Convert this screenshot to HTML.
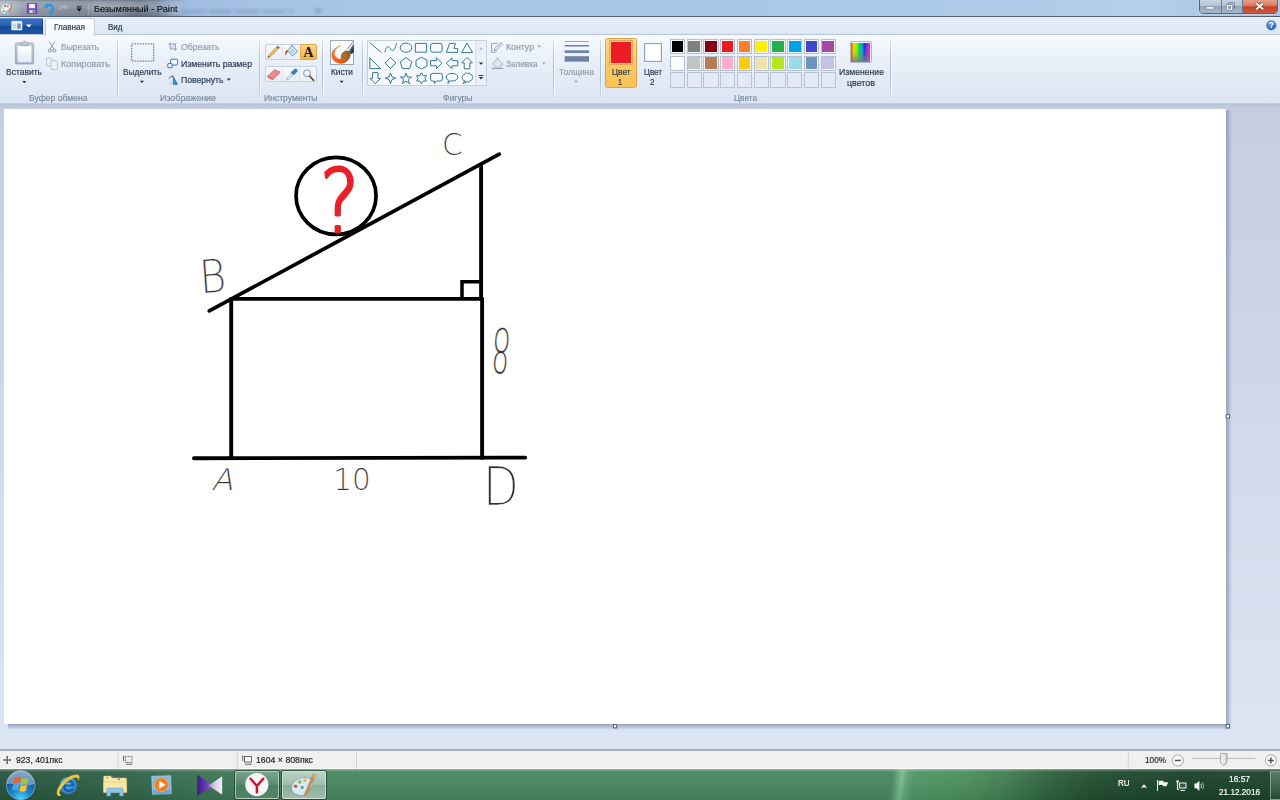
<!DOCTYPE html>
<html lang="ru"><head><meta charset="utf-8"><title>Безымянный - Paint</title>
<style>
html,body{margin:0;padding:0;}
body{width:1280px;height:800px;overflow:hidden;position:relative;background:#d3deee;font-family:"Liberation Sans","DejaVu Sans",sans-serif;}
.a{position:absolute;}
.t{-webkit-text-stroke:0.18px currentColor;position:absolute;height:14px;line-height:14px;white-space:nowrap;transform-origin:0 50%;font-family:"Liberation Sans","DejaVu Sans",sans-serif;}
svg{position:absolute;left:0;top:0;overflow:visible;}
/* title bar */
#title{left:0;top:0;width:1280px;height:16px;background:linear-gradient(90deg,#a6b0bd 0px,#98a2b0 14px,#8c97a6 40px,#828d9c 88px,#717c8b 118px,#677381 140px,#6f7f95 154px,#88a1bf 170px,#9fbde0 188px,#a5c4e6 260px,#a8c7e7 500px,#aac9e8 900px,#b3cfeb 1150px,#adcbe8 1200px,#a8c4e2 1280px);}
#titleL{left:0;top:0;width:200px;height:16px;background:linear-gradient(180deg,rgba(30,40,60,.14) 0,rgba(255,255,255,.10) 2px,rgba(255,255,255,.10) 7px,rgba(255,255,255,0) 10px,rgba(30,40,60,.10) 16px);-webkit-mask-image:linear-gradient(90deg,#000 0,#000 140px,transparent 195px);mask-image:linear-gradient(90deg,#000 0,#000 140px,transparent 195px);}
#titleline{left:0;top:15.6px;width:1280px;height:1.4px;background:#525e6e;}
#tabrow{left:0;top:17px;width:1280px;height:17px;background:linear-gradient(180deg,#f0f5fb 0,#e4edf7 1.5px,#dde8f4 100%);}
#tabline{left:0;top:34px;width:1280px;height:1px;background:#b8c6da;}
#ribbon{left:0;top:35px;width:1280px;height:69px;background:linear-gradient(180deg,#f6fafe 0,#eef4fb 14px,#e3ebf6 40px,#dbe5f2 69px);}
#ribbonline{left:0;top:103px;width:1280px;height:1px;background:#c3cfe0;}
#ribbonshadow{left:0;top:103.8px;width:1280px;height:5px;background:linear-gradient(180deg,#b5c3d6,rgba(190,202,220,.7) 60%,rgba(197,205,224,0));}
#work{left:0;top:104px;width:1280px;height:645px;background:linear-gradient(180deg,#c5cde0 0,#cbd4e5 30%,#d3dcec 60%,#dce5f3 100%);}
#workleft{display:none;}
#canvas{left:4px;top:108.7px;width:1222px;height:615.5px;background:#fff;}
#shr{left:1226px;top:109.5px;width:5.5px;height:619px;background:linear-gradient(90deg,rgba(128,142,168,.75),rgba(140,155,182,.45) 50%,rgba(150,165,190,0));}
#shb{left:8px;top:724.2px;width:1221px;height:5.5px;background:linear-gradient(180deg,rgba(128,142,168,.75),rgba(140,155,182,.45) 50%,rgba(150,165,190,0));}
#status{left:0;top:749px;width:1280px;height:20.4px;background:linear-gradient(180deg,#f3f0f0 0,#f1eeee 16.6px,#fbfafa 17.2px,#fbfafa 100%);border-top:2px solid #a9aeba;box-sizing:border-box;}
#taskbar{left:0;top:769px;width:1280px;height:31px;background:linear-gradient(180deg,rgba(235,240,238,.55) 0,rgba(225,235,230,.28) 1px,rgba(225,235,230,.18) 2.2px,rgba(255,255,255,.05) 3px,rgba(255,255,255,.03) 12px,rgba(0,0,0,.06) 30px),linear-gradient(97deg,#26523d 0,#2a5941 60px,#306349 130px,#3a7153 200px,#47855f 330px,#47855f 886px,#5c9c70 891px,#7ab88e 896px,#5fa374 901px,#4f9465 908px,#4a8c5c 960px,#407c50 1000px,#2e5f3c 1045px,#214c30 1090px,#1b412a 1180px,#1d452c 1284px);}
#filebtn{left:0;top:17.5px;width:42.5px;height:16.5px;background:linear-gradient(180deg,#3a73c0 0,#2a62b2 45%,#164a98 55%,#1e57a8 100%);border-radius:0 2px 0 0;box-shadow:inset 0 1px 0 #5b8ed0,inset -1px 0 0 #123f85;}
#tabactive{left:44.6px;top:18px;width:50.2px;height:17.5px;background:linear-gradient(180deg,#fbfdff,#f5f9fd);border:1px solid #c2cfe0;border-bottom:none;border-radius:2.5px 2.5px 0 0;box-sizing:border-box;}
#winbtns{left:1199px;top:-2px;width:79px;height:15.5px;border:1px solid #56657a;border-radius:0 0 4px 4px;box-sizing:border-box;overflow:hidden;background:#b9c9dc;box-shadow:0 0 2px rgba(255,255,255,.6);}
#wmin{left:0;top:0;width:21px;height:15px;background:linear-gradient(180deg,#c9d6e6 0,#b5c4d8 45%,#93a6bf 50%,#a9bad0 100%);border-right:1px solid #6b7a90;}
#wmax{left:22px;top:0;width:20px;height:15px;background:linear-gradient(180deg,#c9d6e6 0,#b5c4d8 45%,#93a6bf 50%,#a9bad0 100%);border-right:1px solid #6b7a90;}
#wclose{left:43px;top:0;width:36px;height:15px;background:linear-gradient(180deg,#e9a694 0,#d9785f 45%,#c4402a 52%,#cf5a3d 100%);}
.sep{top:40px;width:1px;height:57.5px;background:linear-gradient(180deg,rgba(176,190,210,.35),#b2bfd2 30%,#b2bfd2 70%,rgba(176,190,210,.35));box-shadow:1px 0 0 rgba(255,255,255,.6);}
.toolbox{border:1px solid #c4d0e0;border-radius:2px;box-sizing:border-box;background:linear-gradient(180deg,#f5f8fc,#e9eff7);}
#toolA{left:300px;top:44.3px;width:16.7px;height:16px;border:1px solid #e2a645;border-radius:2px;box-sizing:border-box;background:linear-gradient(180deg,#fdd78d 0,#fbc261 50%,#fab546 100%);}
#brushbox{left:330px;top:40px;width:24.2px;height:24.7px;background:#f9fbfd;border:1px solid #9ea7b4;box-sizing:border-box;}
#gallery{left:367.3px;top:40.3px;width:119.4px;height:45.6px;border:1px solid #c3d0e1;box-sizing:border-box;background:#f6f9fc;}
#galscroll{right:0;top:0;width:9.6px;height:43.6px;background:linear-gradient(90deg,#e6edf7,#eef3fa);border-left:1px solid #d6dfec;}
#color1{left:605px;top:38.3px;width:31.8px;height:50px;border:1px solid #e0a343;border-radius:2.5px;box-sizing:border-box;background:linear-gradient(180deg,#fcd88f 0,#fbc968 45%,#fbc256 100%);}
#c1sw{left:609px;top:40px;width:24px;height:24.5px;border:1px solid #d9a85a;box-sizing:border-box;background:#f6c775;padding:1px;}
#c1sw div{width:100%;height:100%;background:#ed1c24;}
#c2sw{left:643.9px;top:43.1px;width:18.2px;height:18.5px;border:1px solid #98a4b6;box-sizing:border-box;background:#e9eef5;padding:0.8px;}
#c2sw div{width:100%;height:100%;background:#fff;}
#palette{left:669.8px;top:38.9px;width:170px;height:50px;}
.pc{position:absolute;width:15.2px;height:15.2px;border:1px solid #b5c0d0;box-sizing:border-box;background:#f3f6fa;padding:0.8px;}
.pc div{width:100%;height:100%;}
.pc.e{background:#e3eaf5;border-color:#b9c3d2;}
#rainbow{left:849.7px;top:41.3px;width:22px;height:22.2px;border:1px solid #aeb8c6;box-sizing:border-box;background:#eef2f8;padding:0.7px;border-radius:1px;}
#rainbow div{width:100%;height:100%;background:linear-gradient(180deg,rgba(128,128,128,0) 0,rgba(128,128,128,.15) 50%,rgba(128,128,128,.9) 100%),linear-gradient(90deg,#ff4a00 0,#ffd800 15%,#7cff00 30%,#00d060 45%,#00b0d0 58%,#1030e0 72%,#c020e0 86%,#ff2080 100%);}
.tbtn{top:770.6px;height:28.6px;border:1px solid rgba(235,245,240,.55);border-radius:2px;box-sizing:border-box;box-shadow:0 0 0 1px rgba(20,50,35,.6);}
#showdesk{left:1269.5px;top:771px;width:11px;height:29px;border:1px solid rgba(200,225,210,.45);box-sizing:border-box;background:linear-gradient(180deg,rgba(255,255,255,.25),rgba(255,255,255,.05));}

#ghost{left:182px;top:8.5px;width:112px;height:5px;background:repeating-linear-gradient(90deg,rgba(70,90,120,.17) 0,rgba(70,90,120,.17) 22px,rgba(70,90,120,.06) 22px,rgba(70,90,120,.06) 27px);filter:blur(1.6px);}
#ghost2{left:314px;top:7.5px;width:8px;height:6.5px;background:rgba(70,90,120,.22);filter:blur(1.6px);border-radius:3px;}

#haze{left:90px;top:2px;width:92px;height:12px;background:rgba(225,232,240,.30);filter:blur(3px);border-radius:6px;}
#dark1{left:128px;top:9px;width:40px;height:8px;background:rgba(50,60,75,.35);filter:blur(4px);}
#hazeL{left:-4px;top:0;width:22px;height:16px;background:rgba(230,236,244,.25);filter:blur(3px);}

</style></head>
<body>
<div class="a" id="title"></div><div class="a" id="titleL"></div>
<div class="a" id="dark1"></div><div class="a" id="haze"></div><div class="a" id="hazeL"></div><div class="a" id="ghost"></div><div class="a" id="ghost2"></div>
<div class="a" id="titleline"></div>
<div class="a" id="tabrow"></div>
<div class="a" id="tabline"></div>
<div class="a" id="ribbon"></div>
<div class="a" id="ribbonline"></div>
<div class="a" id="work"></div>
<div class="a" id="ribbonshadow"></div>
<div class="a" id="workleft"></div>
<div class="a" id="shr"></div><div class="a" id="shb"></div>
<div class="a" id="canvas"></div>
<div class="a" id="status"></div>
<div class="a" id="taskbar"></div>

<!-- file button + tabs -->
<div class="a" id="filebtn"></div>
<div class="a" id="tabactive"></div>

<!-- window buttons -->
<div class="a" id="winbtns"><div class="a" id="wmin"></div><div class="a" id="wmax"></div><div class="a" id="wclose"></div></div>

<!-- ribbon separators -->
<div class="a sep" style="left:117px"></div>
<div class="a sep" style="left:259px"></div>
<div class="a sep" style="left:321.5px"></div>
<div class="a sep" style="left:362px"></div>
<div class="a sep" style="left:552.5px"></div>
<div class="a sep" style="left:600px"></div>
<div class="a sep" style="left:890px"></div>

<!-- tools boxes -->
<div class="a toolbox" style="left:264.5px;top:44.3px;width:52px;height:16px"></div>
<div class="a toolbox" style="left:264.5px;top:66.2px;width:52px;height:16px"></div>
<div class="a" id="toolA"></div>
<div class="a" id="brushbox"></div>

<!-- shapes gallery -->
<div class="a" id="gallery"><div class="a" id="galscroll"></div></div>

<!-- colors -->
<div class="a" id="color1"></div>
<div class="a" id="c1sw"><div></div></div>
<div class="a" id="c2sw"><div></div></div>
<div class="a" id="palette">
<div class="pc" style="left:0.00px;top:0.00px"><div style="background:#000000"></div></div>
<div class="pc" style="left:16.76px;top:0.00px"><div style="background:#7f7f7f"></div></div>
<div class="pc" style="left:33.52px;top:0.00px"><div style="background:#880015"></div></div>
<div class="pc" style="left:50.28px;top:0.00px"><div style="background:#ed1c24"></div></div>
<div class="pc" style="left:67.04px;top:0.00px"><div style="background:#ff7f27"></div></div>
<div class="pc" style="left:83.80px;top:0.00px"><div style="background:#fff200"></div></div>
<div class="pc" style="left:100.56px;top:0.00px"><div style="background:#22b14c"></div></div>
<div class="pc" style="left:117.32px;top:0.00px"><div style="background:#00a2e8"></div></div>
<div class="pc" style="left:134.08px;top:0.00px"><div style="background:#3f48cc"></div></div>
<div class="pc" style="left:150.84px;top:0.00px"><div style="background:#a349a4"></div></div>
<div class="pc" style="left:0.00px;top:16.76px"><div style="background:#ffffff"></div></div>
<div class="pc" style="left:16.76px;top:16.76px"><div style="background:#c3c3c3"></div></div>
<div class="pc" style="left:33.52px;top:16.76px"><div style="background:#b97a57"></div></div>
<div class="pc" style="left:50.28px;top:16.76px"><div style="background:#ffaec9"></div></div>
<div class="pc" style="left:67.04px;top:16.76px"><div style="background:#ffc90e"></div></div>
<div class="pc" style="left:83.80px;top:16.76px"><div style="background:#efe4b0"></div></div>
<div class="pc" style="left:100.56px;top:16.76px"><div style="background:#b5e61d"></div></div>
<div class="pc" style="left:117.32px;top:16.76px"><div style="background:#99d9ea"></div></div>
<div class="pc" style="left:134.08px;top:16.76px"><div style="background:#7092be"></div></div>
<div class="pc" style="left:150.84px;top:16.76px"><div style="background:#c8bfe7"></div></div>
<div class="pc e" style="left:0.00px;top:33.52px"></div>
<div class="pc e" style="left:16.76px;top:33.52px"></div>
<div class="pc e" style="left:33.52px;top:33.52px"></div>
<div class="pc e" style="left:50.28px;top:33.52px"></div>
<div class="pc e" style="left:67.04px;top:33.52px"></div>
<div class="pc e" style="left:83.80px;top:33.52px"></div>
<div class="pc e" style="left:100.56px;top:33.52px"></div>
<div class="pc e" style="left:117.32px;top:33.52px"></div>
<div class="pc e" style="left:134.08px;top:33.52px"></div>
<div class="pc e" style="left:150.84px;top:33.52px"></div>
</div>
<div class="a" id="rainbow"><div></div></div>

<!-- canvas drawing -->
<svg id="drawing" width="1280" height="800" viewBox="0 0 1280 800">
  <g fill="none" stroke="#000" stroke-width="3.9" stroke-linecap="round">
    <line x1="194" y1="458.2" x2="525.2" y2="457.6"/>
    <line x1="231.2" y1="299" x2="231.2" y2="458"/>
    <line x1="481.1" y1="166.5" x2="481.1" y2="298.9"/>
    <line x1="482.1" y1="298.9" x2="482.1" y2="457.8"/>
    <line x1="231.2" y1="298.9" x2="482" y2="298.9"/>
    <line x1="209.3" y1="310.9" x2="499.3" y2="154.2" stroke-width="3.7"/>
    <ellipse cx="336.05" cy="195.85" rx="40" ry="38.5" stroke-width="3.7"/>
    <path d="M462 297 V281.8 H481" stroke-width="3.5" stroke-linecap="butt"/>
  </g>
  <g font-family="'DejaVu Sans','Liberation Sans',sans-serif" font-weight="200" fill="#333" stroke="#fff" stroke-width="0.2">
    <text id="lq" x="339.5" y="232" font-size="88" fill="#e8202a" stroke="#e8202a" stroke-width="3.1" stroke-linejoin="round" text-anchor="middle" transform="translate(339.5 0) scale(0.84 1) translate(-339.5 0)">?</text>
    <text id="lC" x="452.5" y="155.5" font-size="31" text-anchor="middle" transform="translate(452.5 0) scale(0.96 1) translate(-452.5 0)">C</text>
    <text id="lB" stroke-width="0.42" x="212.5" y="292.5" font-size="46" text-anchor="middle" transform="rotate(-4 212 275) translate(212.5 0) scale(0.88 1) translate(-212.5 0)">B</text>
    <text id="l8" stroke-width="0.5" x="501.5" y="373" font-size="62" text-anchor="middle" transform="rotate(184 501.3 350.6) translate(501.5 0) scale(0.48 1) translate(-501.5 0)">8</text>
    <text id="lA" x="222" y="490" font-size="30" text-anchor="middle" transform="translate(222 490) skewX(-14) scale(1.05 1) translate(-222 -490)">A</text>
    <text id="l10" x="352" y="490" font-size="30" text-anchor="middle" transform="translate(352 0) scale(0.98 1) translate(-352 0)">10</text>
    <text id="lD" stroke-width="0.5" x="501" y="505" font-size="53" text-anchor="middle" transform="translate(501 0) scale(0.88 1) translate(-501 0)">D</text>
  </g>
  <!-- canvas handles -->
  <g fill="#fff" stroke="#4a5568" stroke-width="0.9">
    <rect x="1226.1" y="414.8" width="3.3" height="3.3"/>
    <rect x="613.4" y="724.6" width="3.3" height="3.3"/>
    <rect x="1226.1" y="724.6" width="3.3" height="3.3"/>
  </g>
</svg>

<!-- ribbon icons -->
<svg id="icons" width="1280" height="110" viewBox="0 0 1280 110">
  <defs>
    <linearGradient id="gclip" x1="0" y1="0" x2="0" y2="1"><stop offset="0" stop-color="#c3cede"/><stop offset="1" stop-color="#9eacc4"/></linearGradient>
    <linearGradient id="gpaper" x1="0" y1="0" x2="0" y2="1"><stop offset="0" stop-color="#ffffff"/><stop offset="1" stop-color="#e4eaf4"/></linearGradient>
    <linearGradient id="gbrush" x1="0" y1="0" x2="0.6" y2="1"><stop offset="0" stop-color="#c9703a"/><stop offset="0.45" stop-color="#f0712a"/><stop offset="1" stop-color="#e8561c"/></linearGradient>
    <radialGradient id="ghelp" cx="0.4" cy="0.3" r="0.8"><stop offset="0" stop-color="#6fa4ea"/><stop offset="1" stop-color="#1546a8"/></radialGradient>
  </defs>

  <!-- quick access: app icon -->
  <g>
    <path d="M0.5 9.5 C0.5 5.5 4 3.2 7.2 3.6 C10.4 4 11.4 6.6 10 8.4 C9 9.6 7.6 9.4 7.4 10.6 C7.2 12 8.6 12.6 7 13.6 C4 14.8 0.5 13 0.5 9.5Z" fill="#eef2f8" stroke="#8f9fb8" stroke-width="0.6"/>
    <circle cx="3" cy="8" r="1.1" fill="#e9c53a"/><circle cx="5.2" cy="5.8" r="1.1" fill="#d4552f"/><circle cx="7.8" cy="6.2" r="1" fill="#4a8fd8"/><circle cx="3.6" cy="11" r="1.1" fill="#4fae5a"/><circle cx="6" cy="12.2" r="0.9" fill="#3fa6d8"/>
    <path d="M9.2 11.5 L11.3 3.2 L12.4 3.6 L10.6 12Z" fill="#e58a3a"/><path d="M11.3 3.2 L11.8 1.6 L12.6 2 L12.4 3.6Z" fill="#b8b8c8"/>
  </g>
  <line x1="17.5" y1="3" x2="17.5" y2="14" stroke="#9fb0c8" stroke-width="0.6" opacity=".6"/>
  <!-- save -->
  <g>
    <rect x="27.2" y="3.6" width="9.6" height="9.8" rx="0.8" fill="#7a4fb8" stroke="#5b3594" stroke-width="0.6"/>
    <rect x="29" y="3.9" width="6" height="4.3" fill="#f3e9fb"/>
    <rect x="29.4" y="10" width="5.2" height="3.2" fill="#d9cdea"/><rect x="32.6" y="10.5" width="1.3" height="2.2" fill="#6a45a5"/>
  </g>
  <!-- undo -->
  <path d="M46.4 5.8 Q52.4 3.8 53 8.4 Q53.2 11.4 50.6 13.4" fill="none" stroke="#2b97e4" stroke-width="2.5" stroke-linecap="round"/>
  <path d="M43.4 7.6 L47.6 3.2 L48 8.6Z" fill="#2b97e4"/>
  <!-- redo (disabled) -->
  <path d="M66.2 6.8 Q61 5 60.2 9 " fill="none" stroke="#b4bfce" stroke-width="2" stroke-linecap="round" opacity=".65"/>
  <path d="M68.6 8.2 L64.8 4.4 L64.6 9Z" fill="#b4bfce" opacity=".65"/>
  <!-- qat dropdown -->
  <rect x="76.8" y="6.4" width="4.8" height="1" fill="#0d0d0d"/>
  <path d="M76.6 8.6 H81.8 L79.2 11.4Z" fill="#0d0d0d"/>
  <line x1="87.4" y1="3" x2="87.4" y2="14" stroke="#5a6675" stroke-width="0.6" opacity=".6"/>
  <line x1="88.1" y1="3" x2="88.1" y2="14" stroke="#d5dde8" stroke-width="0.7" opacity=".7"/>

  <!-- file button icon -->
  <rect x="11.6" y="21.2" width="10.4" height="8.8" rx="0.6" fill="#f4f7fc" stroke="#dfe8f5" stroke-width="0.5"/>
  <rect x="12.8" y="23.4" width="3.6" height="5.4" fill="#c9d3e6"/>
  <rect x="17.2" y="23.4" width="3.6" height="5.4" fill="#7a86c2"/>
  <path d="M26 24.4 H31.6 L28.8 27.4Z" fill="#fff"/>

  <!-- window buttons glyphs -->
  <rect x="1206" y="6.6" width="8" height="2.6" rx="0.6" fill="#fdfdfd" stroke="#5b6778" stroke-width="0.6"/>
  <rect x="1228.3" y="2.6" width="6.2" height="5.6" rx="0.6" fill="none" stroke="#5b6778" stroke-width="0.7"/>
  <rect x="1226.4" y="4.4" width="6.4" height="6" rx="0.7" fill="#fdfdfd" stroke="#5b6778" stroke-width="0.7"/>
  <rect x="1228.4" y="6.4" width="2.4" height="2.2" fill="#8fa0b8" stroke="#5b6778" stroke-width="0.4"/>
  <path d="M1256.2 3.2 L1263.2 9.2 M1263.2 3.2 L1256.2 9.2" stroke="#6b2a1d" stroke-width="3" stroke-linecap="butt"/>
  <path d="M1256.2 3.2 L1263.2 9.2 M1263.2 3.2 L1256.2 9.2" stroke="#fff" stroke-width="1.9" stroke-linecap="butt"/>

  <!-- help -->
  <circle cx="1271.3" cy="25.3" r="5" fill="url(#ghelp)" stroke="#9db7e0" stroke-width="0.8"/>
  <text x="1271.3" y="28.4" font-size="8.6" font-weight="bold" fill="#fff" text-anchor="middle" font-family="'Liberation Sans',sans-serif">?</text>

  <!-- paste -->
  <g>
    <rect x="15.3" y="43" width="18.4" height="21" rx="1.6" fill="url(#gclip)" stroke="#93a1ba" stroke-width="0.7"/>
    <rect x="17.4" y="45.6" width="14.2" height="16.6" fill="url(#gpaper)" stroke="#b9c4d6" stroke-width="0.4"/>
    <path d="M20.5 45.8 V43.4 Q20.5 42.6 21.5 42.6 H22.8 Q23 41 24.5 41 Q26 41 26.2 42.6 H27.5 Q28.5 42.6 28.5 43.4 V45.8Z" fill="#b9c4d6" stroke="#8f9db5" stroke-width="0.5"/>
  </g>
  <!-- scissors (disabled) -->
  <g stroke="#8d9bb3" stroke-width="1" fill="none" stroke-linecap="round">
    <path d="M49.3 41.8 L54 49.4 M54.6 41.8 L50 49.4"/>
    <circle cx="49.8" cy="50.6" r="1.5"/><circle cx="54.2" cy="50.6" r="1.5"/>
  </g>
  <!-- copy (disabled) -->
  <g fill="#eef2f8" stroke="#a5b1c5" stroke-width="0.7">
    <path d="M46.6 58 H50.6 L52.4 59.8 V66 H46.6Z"/>
    <path d="M51 60.8 H55.4 L57.4 62.8 V69.4 H51Z"/>
  </g>
  <!-- dropdown arrows -->
  <g fill="#2b2b2b">
    <path d="M22.3 81 H26.3 L24.3 83.2Z"/>
    <path d="M140 80.8 H144 L142 83Z"/>
    <path d="M226.8 78.5 H230.8 L228.8 80.7Z"/>
    <path d="M339.6 80.7 H343.6 L341.6 82.9Z"/>
  </g>
  <g fill="#9aa3b2">
    <path d="M537.2 45.6 H541.2 L539.2 47.8Z"/>
    <path d="M541.8 62.4 H545.8 L543.8 64.6Z"/>
    <path d="M574.1 80.8 H578.1 L576.1 83Z"/>
  </g>

  <!-- select dashed rect -->
  <rect x="131.7" y="43.9" width="22" height="17.2" fill="none" stroke="#465c80" stroke-width="0.9" stroke-dasharray="1.6 1.1"/>
  <!-- crop (disabled) -->
  <g stroke="#8d9bb3" stroke-width="0.9" fill="none">
    <path d="M170.2 42.4 V49 H177"/><path d="M168.4 44 H175.4 V50.8"/><path d="M171.2 48 L176.6 42.6" stroke-width="0.7"/>
  </g>
  <!-- resize -->
  <g fill="#f4f8fd" stroke="#2c6aa6" stroke-width="0.9">
    <rect x="170.6" y="59.2" width="7" height="5.8" rx="0.6"/>
    <rect x="167.8" y="63.6" width="4.4" height="4" rx="0.4"/>
  </g>
  <!-- rotate -->
  <g>
    <path d="M173.4 76.6 L177.6 84.4 H173.4Z" fill="#3b8cd0" stroke="#1f5f9e" stroke-width="0.6"/>
    <path d="M172.4 84.4 H168.4 L172.4 79.4Z" fill="#c9d2e0" opacity=".8"/>
    <path d="M168.8 78.6 Q170.2 76 172.6 76.2" fill="none" stroke="#3c4a60" stroke-width="0.8"/>
    <path d="M172 75.2 L173.6 76.3 L171.9 77.3Z" fill="#3c4a60"/>
  </g>

  <g stroke="#d3dce9" stroke-width="0.7"><line x1="282.2" y1="45.4" x2="282.2" y2="59.4"/><line x1="282.2" y1="67.2" x2="282.2" y2="81.2"/><line x1="299.6" y1="67.2" x2="299.6" y2="81.2"/></g>
  <!-- tools: pencil -->
  <g>
    <path d="M267.8 57.6 L268.6 55.2 L276.6 47 L278.4 48.8 L270.2 56.9Z" fill="#f0c64a" stroke="#8a6a2a" stroke-width="0.5"/>
    <path d="M276.6 47 L277.8 45.9 L279.5 47.6 L278.4 48.8Z" fill="#c7574a" stroke="#7a3a30" stroke-width="0.4"/>
    <path d="M267.8 57.6 L268.3 56 L269.4 57.1Z" fill="#333"/>
  </g>
  <!-- bucket -->
  <g>
    <path d="M287.6 50.2 L292.4 46 L297.6 51.4 L292.4 56Z" fill="#e9f1fb" stroke="#3c78b4" stroke-width="0.8"/>
    <path d="M289.4 51 L292.4 48.4 L295.4 51.4 L292.4 54Z" fill="#b7d2ee"/>
    <path d="M287.4 50 Q284.6 51 285.2 56 Q286.6 52.6 288.4 51.2Z" fill="#d8452e"/>
    <path d="M291 46.8 Q291.6 44.2 293.4 45.4" fill="none" stroke="#6a7f9a" stroke-width="0.6"/>
  </g>
  <!-- A -->
  <text x="308.4" y="57.4" font-size="14.2" font-weight="bold" fill="#1a1a1a" text-anchor="middle" font-family="'Liberation Serif',serif">A</text>
  <!-- eraser -->
  <g>
    <path d="M267.6 76 L274.6 69.6 L279.8 71.6 L273 78.4Z" fill="#f08a8a" stroke="#c55a5a" stroke-width="0.5"/>
    <path d="M267.6 76 L273 78.4 L272.8 80.2 L267.6 77.8Z" fill="#d96a6a"/>
    <path d="M273 78.4 L279.8 71.6 L279.6 73.4 L272.8 80.2Z" fill="#e27a7a"/>
  </g>
  <!-- picker -->
  <g>
    <path d="M286.6 79.8 L287 78.2 L292 73 L293.6 74.6 L288.4 79.6Z" fill="#e8eef6" stroke="#7a8698" stroke-width="0.5"/>
    <path d="M291.2 72.6 L294.6 69.2 Q296.2 68.4 297 69.6 Q297.8 70.8 296.6 72 L293.6 75Z" fill="#2f7fd0" stroke="#1f5aa0" stroke-width="0.5"/>
  </g>
  <!-- magnifier -->
  <g>
    <circle cx="307" cy="73.2" r="3.5" fill="#e9f3fb" stroke="#6d8fb4" stroke-width="0.9"/>
    <path d="M309.6 76 L313.6 80.4" stroke="#6a4a32" stroke-width="1.6" stroke-linecap="round"/>
  </g>
  <!-- brush icon -->
  <g>
    <path d="M353.7 41 L347 49.6 L350.6 53.6 L353.8 49 Z" fill="#f4f6fa"/>
    <path d="M353.6 41.2 L346.8 49.8" stroke="#5a6270" stroke-width="0.7" fill="none"/>
    <path d="M353.8 43.6 L348.6 51.4 L350.8 54 L353.8 50.4Z" fill="#4a5a80"/>
    <path d="M353.8 46.5 L350.4 52.6 L351.6 54.2 L353.8 52Z" fill="#2c3850"/>
    <path d="M341.4 59.6 C340 56 341.4 52.6 344.8 51 C346.8 50.3 349.2 50.9 350.4 52.6 C351 56.2 349.4 60 346.2 62 C344 63 342 62 341.4 59.6Z" fill="#a96c2c"/>
    <path d="M344.8 51 C346.8 50.3 349.2 50.9 350.4 52.6 C350.8 55 350.2 57.4 348.8 59.4 C347.8 56.4 346.6 53.4 344.8 51Z" fill="#8f5a26" opacity=".7"/>
    <path d="M339.9 45.4 C340.4 46 340 46.6 339.4 46.8 C337 47.8 334.6 49.8 334.4 53.4 C334.6 57 338 59.2 341.6 58.6 L346.6 61 C345 63.2 342.4 64 339.4 63.6 C334 62.6 331 58.4 331.6 54 C332.4 49.2 336.4 47.6 339.9 45.4Z" fill="url(#gbrush)"/>
  </g>

  <!-- shapes -->
  <g fill="none" stroke="#3b7797" stroke-width="1" stroke-linejoin="round">
    <!-- row1 -->
    <path d="M369.6 42.6 L381.4 52.4"/>
    <path d="M385 52.4 C386 45 389 46 390.6 49 C392.2 52 394.8 51 396.4 43.2"/>
    <ellipse cx="406" cy="47.7" rx="5.8" ry="4.6"/>
    <rect x="415.4" y="43.4" width="11.2" height="8.8"/>
    <rect x="430.6" y="43.4" width="11.6" height="8.8" rx="2.2"/>
    <path d="M446.4 52.4 L449.6 43.4 H455.4 L454 48.4 H457.6 V52.4Z"/>
    <path d="M467 43.2 L472.6 52.6 H461.6Z"/>
    <!-- row2 -->
    <path d="M369.8 58 V68.6 H380.6Z"/>
    <path d="M390.5 57.4 L395.8 63 L390.5 68.6 L385.2 63Z"/>
    <path d="M406 57.6 L411.8 61.8 L409.6 68.6 H402.4 L400.2 61.8Z"/>
    <path d="M421.5 57.2 L427 60.2 V66 L421.5 69 L416 66 V60.2Z"/>
    <path d="M430.6 60.6 H436.4 V57.8 L442 63.2 L436.4 68.6 V65.8 H430.6Z"/>
    <path d="M457.8 60.6 H452 V57.8 L446.4 63.2 L452 68.6 V65.8 H457.8Z"/>
    <path d="M464.2 68.8 V62.8 H461.6 L467 57.4 L472.4 62.8 H469.8 V68.8Z"/>
    <!-- row3 -->
    <path d="M372.6 72.6 V78.4 H370 L375.3 83.8 L380.6 78.4 H378 V72.6Z"/>
    <path d="M390.5 73 L392 76.8 L395.8 78.2 L392 79.6 L390.5 83.6 L389 79.6 L385.2 78.2 L389 76.8Z"/>
    <path d="M406 73 L407.5 77 H411.6 L408.3 79.5 L409.5 83.6 L406 81.1 L402.5 83.6 L403.7 79.5 L400.4 77 H404.5Z"/>
    <path d="M421.5 72.8 L423.2 75.6 H426.4 L424.8 78.3 L426.4 81 H423.2 L421.5 83.8 L419.8 81 H416.6 L418.2 78.3 L416.6 75.6 H419.8Z"/>
    <path d="M432.6 73.4 H440.4 Q442.4 73.4 442.4 75.4 V79 Q442.4 81 440.4 81 H436.4 L434.4 83.6 V81 H432.6 Q430.6 81 430.6 79 V75.4 Q430.6 73.4 432.6 73.4Z"/>
    <path d="M452 73.4 C455.6 73.4 457.8 75 457.8 77.2 C457.8 79.4 455.6 81 452 81 C451.2 81 450.6 80.9 450 80.8 L448 83.6 L448.4 80.2 C447 79.5 446.2 78.4 446.2 77.2 C446.2 75 448.4 73.4 452 73.4Z"/>
    <path d="M467.4 73.8 A1.55 1.55 0 0 1 470.3 74.5 A1.55 1.55 0 0 1 472.2 76.4 A1.55 1.55 0 0 1 472.2 78.6 A1.55 1.55 0 0 1 470.3 80.5 A1.55 1.55 0 0 1 467.4 81.2 A1.55 1.55 0 0 1 464.5 80.5 A1.55 1.55 0 0 1 462.6 78.6 A1.55 1.55 0 0 1 462.6 76.4 A1.55 1.55 0 0 1 464.5 74.5 A1.55 1.55 0 0 1 467.4 73.8Z"/><path d="M464.6 81.2 L463 83.6 L466.4 82"/>
  </g>
  <!-- gallery scroll arrows -->
  <path d="M479 49.4 H483 L481 47.2Z" fill="#aab3c2"/>
  <path d="M478.8 62.4 H483.2 L481 64.8Z" fill="#2b2b2b"/>
  <rect x="478.6" y="75" width="4.8" height="0.9" fill="#2b2b2b"/>
  <path d="M478.8 77 H483.2 L481 79.4Z" fill="#2b2b2b"/>

  <!-- outline icon (disabled) -->
  <g fill="none" stroke="#8d9bb3" stroke-width="0.9">
    <path d="M497.6 43.4 H491.6 V52.4 H494.4 Q495.8 52.2 496.8 51"/>
    <path d="M494 50.6 L494.6 48.6 L501 42.6 L502.6 44 L496.2 50.2Z" fill="#e9eef6"/>
  </g>
  <!-- fill icon (disabled) -->
  <g fill="#dfe6f0" stroke="#9aa7bd" stroke-width="0.8">
    <path d="M492.4 63.6 L497.6 58.6 L503 64 L497.6 68.6Z"/>
    <path d="M491.6 68.4 H503.4" stroke-width="1.4"/>
    <path d="M496.6 59.4 Q497 57.2 498.6 58" fill="none"/>
  </g>

  <!-- thickness -->
  <g fill="#6d83a6">
    <rect x="564.6" y="41.2" width="24.4" height="0.7"/>
    <rect x="564.6" y="45" width="24.4" height="1.5"/>
    <rect x="564.6" y="50.3" width="24.4" height="2.7"/>
    <rect x="564.6" y="56.2" width="24.4" height="5.5"/>
  </g>
</svg>

<!-- taskbar buttons -->
<div class="a tbtn" style="left:234.7px;width:44px;background:linear-gradient(180deg,rgba(255,255,255,.28),rgba(255,255,255,.10) 50%,rgba(255,255,255,.03) 52%,rgba(255,255,255,.12));"></div>
<div class="a tbtn" style="left:281.6px;width:44.5px;background:linear-gradient(180deg,rgba(255,255,255,.62),rgba(255,255,255,.48) 48%,rgba(255,255,255,.36) 52%,rgba(255,255,255,.5));"></div>
<div class="a" id="showdesk"></div>

<!-- status + taskbar icons -->
<svg id="bottom" width="1280" height="800" viewBox="0 0 1280 800">
  <defs>
    <radialGradient id="gorb" cx="0.5" cy="0.95" r="0.95"><stop offset="0" stop-color="#4fd0f6"/><stop offset="0.35" stop-color="#1f86cc"/><stop offset="0.7" stop-color="#1a5a9c"/><stop offset="1" stop-color="#4a7aa8"/></radialGradient>
    <radialGradient id="gie" cx="0.4" cy="0.35" r="0.8"><stop offset="0" stop-color="#66c8f8"/><stop offset="1" stop-color="#1566b8"/></radialGradient>
    <linearGradient id="gfold" x1="0" y1="0" x2="0" y2="1"><stop offset="0" stop-color="#fbefb2"/><stop offset="1" stop-color="#ecd27a"/></linearGradient>
    <linearGradient id="gvs1" x1="0" y1="0" x2="1" y2="0"><stop offset="0" stop-color="#3f1a86"/><stop offset="0.6" stop-color="#6a3fb4"/><stop offset="1" stop-color="#9a78d0"/></linearGradient><linearGradient id="gvs2" x1="0" y1="0" x2="1" y2="0"><stop offset="0" stop-color="#a88cd4"/><stop offset="0.5" stop-color="#d9cfea"/><stop offset="1" stop-color="#f1edf7"/></linearGradient>
    <linearGradient id="gthumb" x1="0" y1="0" x2="1" y2="0"><stop offset="0" stop-color="#fafafa"/><stop offset="1" stop-color="#d4d4d4"/></linearGradient>
  </defs>
  <!-- status separators -->
  <g stroke="#d4d1d1" stroke-width="1">
    <line x1="118" y1="752" x2="118" y2="769"/><line x1="237.3" y1="752" x2="237.3" y2="769"/><line x1="356.5" y1="752" x2="356.5" y2="769"/><line x1="1128.3" y1="752" x2="1128.3" y2="769"/>
  </g>
  <!-- crosshair -->
  <g stroke="#333" stroke-width="0.9" fill="#333">
    <line x1="3.6" y1="760" x2="10.8" y2="760"/><line x1="7.2" y1="756.4" x2="7.2" y2="763.6"/>
    <path d="M3.2 760 L4.8 758.9 V761.1Z M11.2 760 L9.6 758.9 V761.1Z M7.2 756 L6.1 757.6 H8.3Z M7.2 764 L6.1 762.4 H8.3Z" stroke="none"/>
  </g>
  <!-- selection size icon -->
  <g fill="none" stroke="#444" stroke-width="0.8">
    <rect x="125.4" y="756.4" width="6.6" height="6" stroke-dasharray="1.4 0.9"/>
    <path d="M123.6 756 V761" /><path d="M126 764.2 H131.6"/>
    <path d="M123.6 755.4 L122.8 756.8 H124.4Z M132.6 764.2 L131.2 763.4 V765Z" fill="#444" stroke="none"/>
  </g>
  <!-- image size icon -->
  <g fill="none" stroke="#444" stroke-width="0.8">
    <rect x="244.6" y="756.6" width="6.8" height="5.4" fill="#fafafa"/>
    <path d="M242.8 756 V761"/><path d="M245 764.2 H251"/>
    <path d="M242.8 755.4 L242 756.8 H243.6Z M252 764.2 L250.6 763.4 V765Z" fill="#444" stroke="none"/>
  </g>
  <!-- zoom controls -->
  <g>
    <circle cx="1177.8" cy="760.4" r="5.6" fill="#fbfbfb" stroke="#9c9c9c" stroke-width="0.9"/>
    <rect x="1174.8" y="759.7" width="6" height="1.5" fill="#555"/>
    <circle cx="1270.9" cy="760.4" r="5.6" fill="#fbfbfb" stroke="#9c9c9c" stroke-width="0.9"/>
    <rect x="1267.9" y="759.7" width="6" height="1.5" fill="#555"/><rect x="1270.15" y="757.4" width="1.5" height="6" fill="#555"/>
    <line x1="1191.4" y1="758.4" x2="1255.4" y2="758.4" stroke="#b9b9b9" stroke-width="1"/>
    <path d="M1220.6 754.4 Q1220.6 753.6 1221.4 753.6 H1226.2 Q1227 753.6 1227 754.4 V762.4 L1223.8 765.4 L1220.6 762.4Z" fill="url(#gthumb)" stroke="#8c8c8c" stroke-width="0.8"/>
  </g>

  <!-- start orb -->
  <circle cx="20.7" cy="785.4" r="14.3" fill="url(#gorb)" stroke="#a9cfe6" stroke-width="0.9" stroke-opacity=".6"/>
  <path d="M6.9 784 A13.8 13.8 0 0 1 34.5 784 Q27 786.6 20.7 785 Q13 783.4 6.9 784Z" fill="#dfe9f2" opacity=".42"/>
  <g>
    <path d="M14.6 777.6 Q17.8 775.8 21 777.4 L19.8 783.2 Q16.8 781.8 13.4 783.4Z" fill="#e8642a"/>
    <path d="M22 778 Q25 779.6 28.6 777.8 L27.4 783.6 Q24.2 785.2 20.8 783.8Z" fill="#9fc83a"/>
    <path d="M13.2 784.6 Q16.6 783 19.6 784.4 L18.4 790.4 Q15.4 789 12 790.6Z" fill="#4aa6e4"/>
    <path d="M20.6 785 Q23.6 786.6 27.2 784.8 L26 790.8 Q22.8 792.4 19.4 791Z" fill="#f4c430"/>
  </g>
  <!-- IE -->
  <g>
    <circle cx="68.4" cy="785.6" r="8.8" fill="url(#gie)"/>
    <path d="M62.8 786.6 H74.4 C74.8 782.6 72.4 779.8 68.8 779.8 C65 779.8 62.4 782.6 62.6 786.2 C62.8 789.8 65.4 792 68.8 792 C71.4 792 73.4 790.6 74.2 788.4 H71.2 C70.6 789.2 69.8 789.6 68.8 789.6 C67 789.6 65.8 788.4 65.8 786.6Z M65.9 784.4 C66.2 783 67.2 782.2 68.7 782.2 C70.2 782.2 71.2 783 71.4 784.4Z" fill="#1c5fb0" fill-rule="evenodd"/>
    <path d="M57.6 795.4 C54.6 792 60 782.2 68 777.4 C73.6 774 78.6 773.8 79.4 776.2 C79.8 777.6 79 779.4 77.8 781 C78.4 778.6 77.6 777.2 75.2 777.6 C70 778.6 62.4 785.6 60.2 790.6 C59 793.4 59.6 795 61.6 795 C59.8 796.2 58.4 796.2 57.6 795.4Z" fill="#f0c53a"/>
  </g>
  <!-- explorer -->
  <g>
    <path d="M103.6 777.2 Q103.6 776 104.8 776 H110.6 L112.2 778 H125.4 Q126.6 778 126.6 779.2 V792 H103.6Z" fill="url(#gfold)" stroke="#d8bd68" stroke-width="0.5"/>
    <rect x="106.4" y="777" width="2" height="1.4" fill="#7bbf4a"/><rect x="111.8" y="776.6" width="2" height="1.6" fill="#e0584a"/><rect x="117.8" y="778.4" width="2.2" height="1.6" fill="#5a8fd8"/>
    <path d="M103.6 782 H126.6 V792.6 H103.6Z" fill="#f7e7a2" stroke="#dcc272" stroke-width="0.4"/>
    <path d="M106.8 796 V789.6 Q106.8 788 108.4 788 H121.8 Q123.4 788 123.4 789.6 V796 H119.6 V792.4 H110.6 V796Z" fill="#8fc4e8" stroke="#5f9fd0" stroke-width="0.5"/>
  </g>
  <!-- WMP -->
  <g>
    <path d="M151.8 776.4 L170.6 775.8 L171.2 793.6 L152.6 794.2Z" fill="#7db9e0" stroke="#a9d2ee" stroke-width="0.8"/>
    <path d="M152.6 794.2 L171.2 793.6 L171 790 L152.4 790.6Z" fill="#5a9acc" opacity=".6"/>
    <circle cx="161.4" cy="784.8" r="7" fill="#ee7f22" stroke="#f6b070" stroke-width="0.8"/>
    <path d="M159.2 780.8 L165.6 784.8 L159.2 788.8Z" fill="#fff"/>
  </g>
  <!-- VS -->
  <g>
    <path d="M197.2 774.8 L213.4 785.4 L197.2 796.2Z" fill="url(#gvs1)"/>
    <path d="M222.2 776.2 L208.6 785.4 L222.2 794.8Z" fill="url(#gvs2)"/>
  </g>
  <!-- yandex -->
  <circle cx="256.8" cy="784.6" r="11.6" fill="#f7f7f7"/>
  <path d="M250.6 778.8 L256.9 786 L263.2 778.8 M256.9 785.8 V792.2" fill="none" stroke="#c8142c" stroke-width="2.5" stroke-linecap="round" stroke-linejoin="round"/>
  <!-- paint taskbar icon -->
  <g>
    <path d="M291.6 789 C291 783 297 777.6 305 777.4 C311 777.4 313.6 781 312.6 785 C311.8 788 308.6 787.6 307.6 789.4 C306.8 791.2 308.6 792.6 306.6 794.4 C302 797 292.4 795 291.6 789Z" fill="#d9e8f3" stroke="#7aa6cc" stroke-width="0.8"/>
    <circle cx="295.6" cy="786.2" r="1.8" fill="#c8604a"/><circle cx="299.8" cy="782" r="1.7" fill="#7ab648"/><circle cx="304.8" cy="780.2" r="1.7" fill="#e8b830"/><circle cx="302.2" cy="787.4" r="1.6" fill="#4aa89a"/>
    <path d="M313.2 773.6 L315.8 774.8 L306.8 794.4 Q305.6 796.4 304.4 795.6 Q303.8 794.6 304.8 793Z" fill="#c98f58" stroke="#9a6a3a" stroke-width="0.3"/>
    <path d="M313.2 773.6 L315.8 774.8 L314.6 777.6 L312 776.4Z" fill="#ddb06a"/>
  </g>
  <!-- tray -->
  <path d="M1141 787.4 H1147 L1144 784.2Z" fill="#f2f2f2"/>
  <g fill="#f4f4f4">
    <rect x="1157" y="780" width="1" height="11"/>
    <path d="M1158.6 780.8 H1163.6 V782.2 L1168.2 782.2 L1166.4 786.2 H1163 V785 H1158.6Z"/>
  </g>
  <g fill="none" stroke="#f4f4f4" stroke-width="1">
    <rect x="1179.4" y="783" width="6.6" height="5" fill="#3a5a4a"/>
    <path d="M1180.4 790.4 H1185"/>
    <path d="M1177.4 781 V789.6 H1179"/>
    <rect x="1176.4" y="780.4" width="2.4" height="2" fill="#f4f4f4" stroke="none"/>
  </g>
  <g fill="#f4f4f4">
    <path d="M1194.4 783.6 H1196.4 L1199.4 780.8 V791 L1196.4 788.2 H1194.4Z"/>
    <path d="M1200.8 783.8 Q1202.2 785.9 1200.8 788" fill="none" stroke="#f4f4f4" stroke-width="0.8"/>
    <path d="M1202.4 782.4 Q1204.8 785.9 1202.4 789.4" fill="none" stroke="#f4f4f4" stroke-width="0.8" opacity=".8"/>
  </g>
</svg>

<div id="texts">
<span class="t" id="t0" style="left:94.00px;top:1.50px;font-size:9.40px;color:#10151c;transform:scaleX(0.9738);">Безымянный - Paint</span>
<span class="t" id="t1" style="left:54.00px;top:19.70px;font-size:9.20px;color:#2a3850;transform:scaleX(0.8865);">Главная</span>
<span class="t" id="t2" style="left:108.00px;top:19.70px;font-size:9.20px;color:#2a3850;transform:scaleX(0.8722);">Вид</span>
<span class="t" id="t3" style="left:6.00px;top:65.30px;font-size:9.20px;color:#2a3850;transform:scaleX(0.9242);">Вставить</span>
<span class="t" id="t4" style="left:61.00px;top:39.70px;font-size:9.20px;color:#919baa;transform:scaleX(0.9297);">Вырезать</span>
<span class="t" id="t5" style="left:61.00px;top:56.70px;font-size:9.20px;color:#919baa;transform:scaleX(0.9905);">Копировать</span>
<span class="t" id="t6" style="left:29.00px;top:91.00px;font-size:9.20px;color:#7b899e;transform:scaleX(0.9369);">Буфер обмена</span>
<span class="t" id="t7" style="left:122.50px;top:65.30px;font-size:9.20px;color:#2a3850;transform:scaleX(0.9082);">Выделить</span>
<span class="t" id="t8" style="left:181.00px;top:39.70px;font-size:9.20px;color:#919baa;transform:scaleX(0.9495);">Обрезать</span>
<span class="t" id="t9" style="left:181.00px;top:56.70px;font-size:9.20px;color:#2a3850;transform:scaleX(0.9484);">Изменить размер</span>
<span class="t" id="t10" style="left:181.00px;top:73.00px;font-size:9.20px;color:#2a3850;transform:scaleX(0.9366);">Повернуть</span>
<span class="t" id="t11" style="left:160.00px;top:91.00px;font-size:9.20px;color:#7b899e;transform:scaleX(0.9676);">Изображение</span>
<span class="t" id="t12" style="left:264.00px;top:91.00px;font-size:9.20px;color:#7b899e;transform:scaleX(0.9337);">Инструменты</span>
<span class="t" id="t13" style="left:330.50px;top:65.30px;font-size:9.20px;color:#2a3850;transform:scaleX(0.9008);">Кисти</span>
<span class="t" id="t14" style="left:506.00px;top:39.50px;font-size:9.20px;color:#919baa;transform:scaleX(0.9507);">Контур</span>
<span class="t" id="t15" style="left:506.00px;top:56.70px;font-size:9.20px;color:#919baa;transform:scaleX(0.8905);">Заливка</span>
<span class="t" id="t16" style="left:442.50px;top:91.00px;font-size:9.20px;color:#7b899e;transform:scaleX(0.9314);">Фигуры</span>
<span class="t" id="t17" style="left:559.00px;top:65.30px;font-size:9.20px;color:#919baa;transform:scaleX(0.9199);">Толщина</span>
<span class="t" id="t18" style="left:611.70px;top:65.30px;font-size:9.20px;color:#2a3850;transform:scaleX(0.8983);">Цвет</span>
<span class="t" id="t19" style="left:617.80px;top:75.30px;font-size:9.20px;color:#2a3850;transform:scaleX(0.7805);">1</span>
<span class="t" id="t20" style="left:644.00px;top:65.30px;font-size:9.20px;color:#2a3850;transform:scaleX(0.8741);">Цвет</span>
<span class="t" id="t21" style="left:649.90px;top:75.30px;font-size:9.20px;color:#2a3850;transform:scaleX(0.8780);">2</span>
<span class="t" id="t22" style="left:839.00px;top:65.30px;font-size:9.20px;color:#2a3850;transform:scaleX(0.9424);">Изменение</span>
<span class="t" id="t23" style="left:847.00px;top:75.50px;font-size:9.20px;color:#2a3850;transform:scaleX(0.9671);">цветов</span>
<span class="t" id="t24" style="left:734.00px;top:91.00px;font-size:9.20px;color:#7b899e;transform:scaleX(0.8987);">Цвета</span>
<span class="t" id="t25" style="left:16.00px;top:753.00px;font-size:9.20px;color:#222;transform:scaleX(0.9400);">923, 401пкс</span>
<span class="t" id="t26" style="left:255.60px;top:753.00px;font-size:9.20px;color:#222;transform:scaleX(0.9510);">1604 × 808пкс</span>
<span class="t" id="t27" style="left:1145.00px;top:753.00px;font-size:9.20px;color:#222;transform:scaleX(0.8936);">100%</span>
<span class="t" id="t28" style="left:1117.50px;top:776.00px;font-size:9.20px;color:#fff;transform:scaleX(0.8659);">RU</span>
<span class="t" id="t29" style="left:1229.00px;top:772.00px;font-size:9.20px;color:#fff;transform:scaleX(0.9130);">16:57</span>
<span class="t" id="t30" style="left:1219.00px;top:785.00px;font-size:9.20px;color:#fff;transform:scaleX(0.8916);">21.12.2016</span>
</div>
</body></html>
